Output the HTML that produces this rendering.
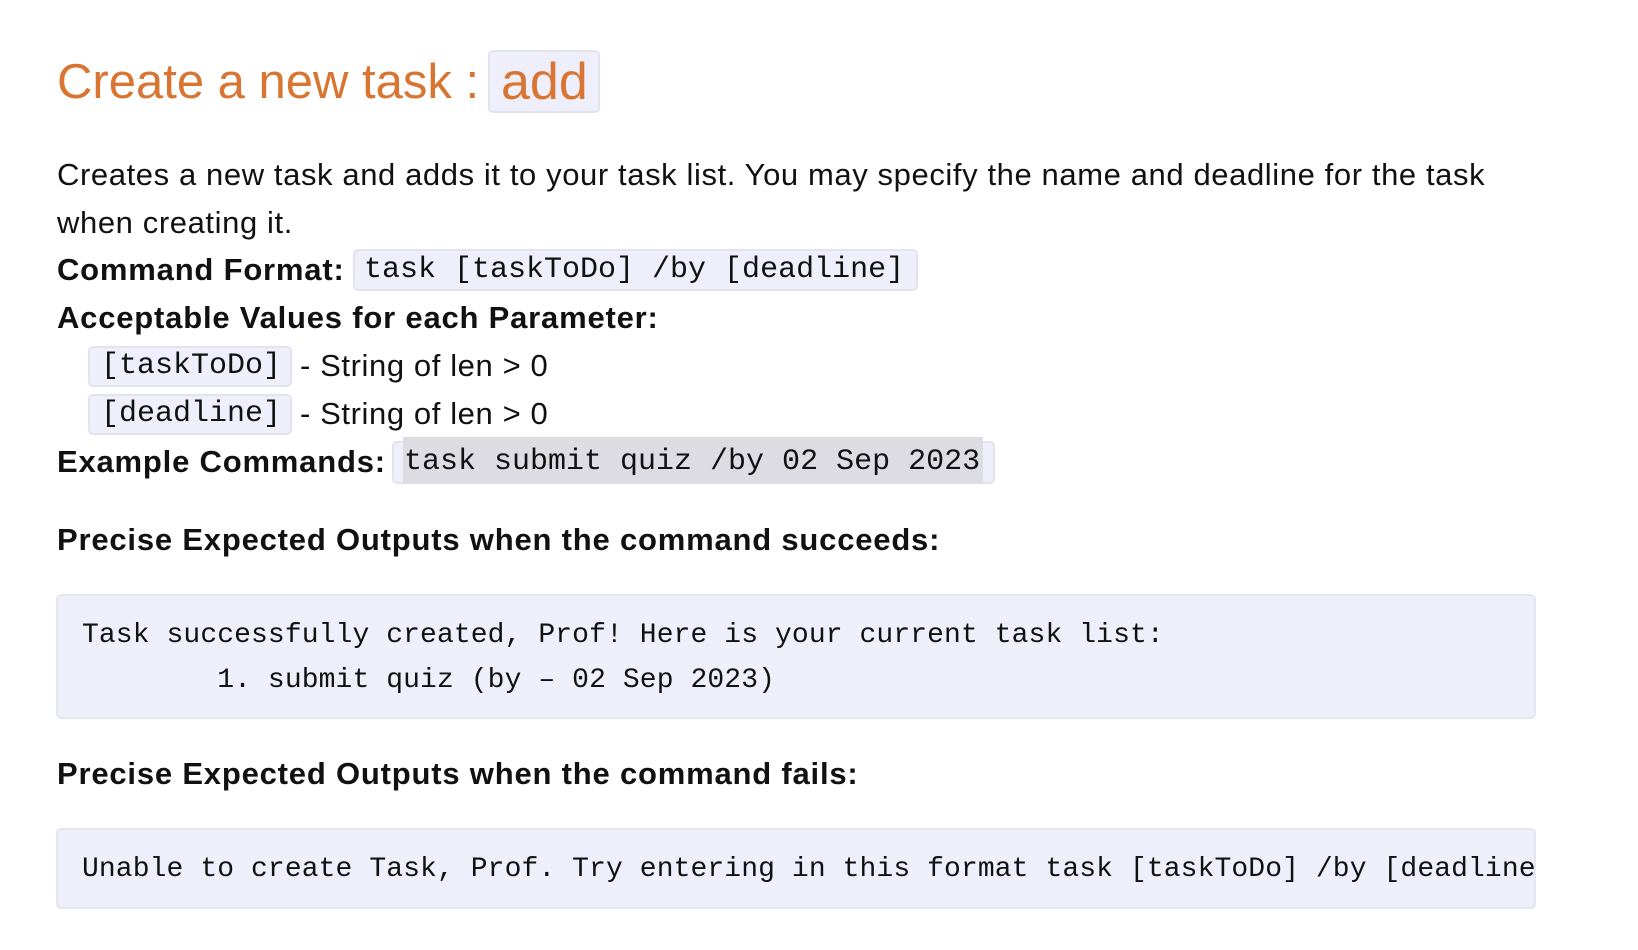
<!DOCTYPE html>
<html><head><meta charset="utf-8"><style>
html,body{margin:0;padding:0;background:#fff;width:1638px;height:950px;overflow:hidden}
body{font-family:"Liberation Sans",sans-serif;color:#111;font-size:31px;letter-spacing:0.6px}
.l{position:absolute;left:57px;white-space:nowrap;line-height:48px}
.c{position:absolute;background:#efeffc;border:2px solid #e3e3f0;border-radius:5px;box-sizing:border-box}
.ct{position:absolute;font-family:"Liberation Mono","DejaVu Sans Mono",monospace;font-size:30px;letter-spacing:0;white-space:nowrap;line-height:40px}
b{font-weight:bold;letter-spacing:0.8px}
pre{margin:0;position:absolute;left:56px;width:1480px;background:#efeffc;border:2px solid #e6e6ef;border-radius:5px;box-sizing:border-box;overflow:hidden;font-family:"Liberation Mono","DejaVu Sans Mono",monospace;font-size:28px;letter-spacing:0.1px;line-height:45px;padding-left:24px;color:#111}
</style></head><body>
<div class="c" style="left:488px;top:50px;width:112px;height:63px"></div>
<div class="l" style="top:52px;color:#d87532;font-size:49px;line-height:60px;letter-spacing:0">Create a new task :</div>
<div class="l" style="left:501px;top:52px;color:#d87532;font-size:52px;line-height:60px;letter-spacing:0">add</div>

<div class="l" style="top:151px">Creates a new task and adds it to your task list. You may specify the name and deadline for the task</div>
<div class="l" style="top:199px">when creating it.</div>

<div class="c" style="left:353px;top:249px;width:565px;height:42px"></div>
<div class="l" style="top:246px"><b>Command Format:</b></div>
<div class="ct" style="left:364px;top:250px">task [taskToDo] /by [deadline]</div>

<div class="l" style="top:294px"><b>Acceptable Values for each Parameter:</b></div>

<div class="c" style="left:88px;top:346px;width:204px;height:41px"></div>
<div class="ct" style="left:101px;top:346px">[taskToDo]</div>
<div class="l" style="left:300px;top:342px">- String of len &gt; 0</div>

<div class="c" style="left:88px;top:394px;width:204px;height:41px"></div>
<div class="ct" style="left:101px;top:394px">[deadline]</div>
<div class="l" style="left:300px;top:390px">- String of len &gt; 0</div>

<div class="c" style="left:392px;top:441px;width:603px;height:43px"></div>
<div style="position:absolute;left:403px;top:437px;width:580px;height:47px;background:#dcdce2"></div>
<div class="l" style="top:438px"><b>Example Commands:</b></div>
<div class="ct" style="left:404px;top:442px">task submit quiz /by 02 Sep 2023</div>

<div class="l" style="top:516px"><b>Precise Expected Outputs when the command succeeds:</b></div>
<pre style="top:594px;height:125px;padding-top:17px">Task successfully created, Prof! Here is your current task list:
        1. submit quiz (by – 02 Sep 2023)</pre>

<div class="l" style="top:750px"><b>Precise Expected Outputs when the command fails:</b></div>
<pre style="top:828px;height:81px;padding-top:17px">Unable to create Task, Prof. Try entering in this format task [taskToDo] /by [deadline]</pre>
</body></html>
